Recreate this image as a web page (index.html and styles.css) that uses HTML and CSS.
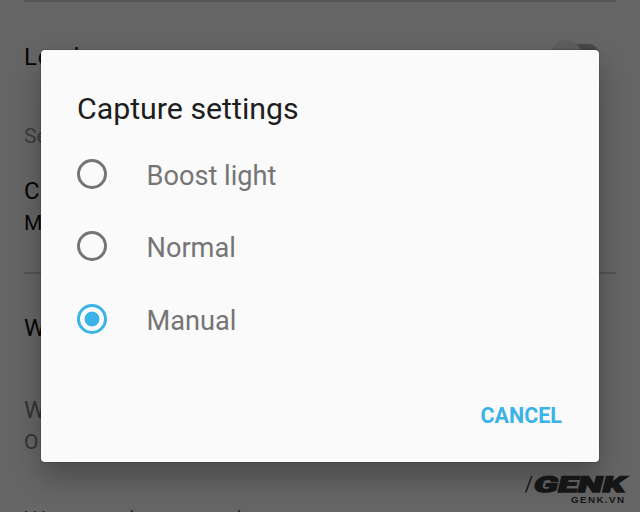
FILE: index.html
```html
<!DOCTYPE html>
<html lang="en">
<head>
<meta charset="utf-8">
<title>Capture settings</title>
<link rel="stylesheet" href="styles.css">
</head>
<body>
<main class="settings">
  <section class="row row-load"><span>Load</span><span class="switch"></span></section>
  <section class="row row-section">Se</section>
  <section class="row row-capture"><span class="name">C</span><span class="value">M</span></section>
  <section class="row row-watermark">W</section>
  <section class="row row-off"><span class="name">W</span><span class="value">O</span></section>
  <section class="row row-last">Watermark camera lens</section>
</main>
<div class="dialog" role="dialog">
  <h1 class="title">Capture settings</h1>
  <div class="options">
    <label class="option"><span class="radio"></span><span class="label">Boost light</span></label>
    <label class="option"><span class="radio"></span><span class="label">Normal</span></label>
    <label class="option"><span class="radio checked"></span><span class="label">Manual</span></label>
  </div>
  <div class="actions"><span class="cancel">CANCEL</span></div>
</div>
<svg class="brand" viewBox="0 0 114 36" width="114" height="36">
  <path d="M5 19.500h1.500L12.500 3h-1.500z"/>
  <text class="brand-name" transform="translate(12.500 18.700) skewX(-14)" textLength="91" lengthAdjust="spacingAndGlyphs">GENK</text>
  <text class="brand-site" x="51" y="29.500" textLength="53">GENK.VN</text>
</svg>
</body>
</html>
```
FILE: styles.css
```css
* { box-sizing: border-box; }
body {
  margin: 0;
  width: 640px;
  height: 512px;
  overflow: hidden;
  position: relative;
  background: #666;
  color: #060606;
  font-family: Roboto, "Liberation Sans", sans-serif;
}
.settings { padding: 0 24px; height: 512px; overflow: hidden; }
.row { display: flex; font-size: 24px; line-height: 28px; }
.row-load { height: 120px; border-top: 2px solid #555; padding-top: 41px; justify-content: space-between; font-size: 24px; letter-spacing: .700px; }
.switch { position: relative; width: 45px; height: 20px; margin: 1px 17px 0 0; border-radius: 10px; background: #484848; }
.switch::before { content: ""; position: absolute; left: -3px; top: -4px; width: 30px; height: 30px; border-radius: 50%; background: #5f5f5f; }
.row-section { height: 50px; padding-top: 2px; font-size: 21px; color: #3c3c3c; }
.row-capture { height: 104px; padding-top: 7px; flex-direction: column; border-bottom: 2px solid #555; }
.value { font-size: 21px; line-height: 32px; margin-top: 2px; }
.row-watermark { height: 82px; padding-top: 40px; }
.row-off { height: 124px; padding-top: 40px; flex-direction: column; color: #343434; }
.row-last { padding-top: 26px; white-space: nowrap; word-spacing: 1.500px; color: #303030; }
.dialog {
  position: absolute;
  left: 41px;
  top: 50px;
  width: 558px;
  height: 412px;
  padding: 39px 37px 0 36px;
  border-radius: 4px;
  background: #fafafa;
  box-shadow: 0 14px 32px rgba(0, 0, 0, .3), 0 0 2px rgba(0, 0, 0, .4);
}
.title { margin: 0; font-size: 30.300px; font-weight: 400; line-height: 40px; color: #1d1d1d; }
.options { padding-top: 10px; }
.option { display: flex; align-items: center; height: 72.300px; font-size: 27.200px; color: #757575; gap: 39.500px; }
.label { padding-top: 2px; }
.radio { position: relative; top: -1px; width: 30px; height: 30px; border: 3px solid #757575; border-radius: 50%; }
.checked { border-color: #3bb3e6; background: radial-gradient(circle, #3bb3e6 7px, transparent 7.800px); }
.actions { display: flex; justify-content: flex-end; margin-top: 46px; }
.cancel { font-size: 21.500px; font-weight: 700; line-height: 28px; color: #3bb3e6; }
.brand { position: absolute; left: 520px; top: 473px; overflow: visible; fill: #151515; }
.brand-name { font: 900 22px Roboto, sans-serif; stroke: #151515; stroke-width: 1.300px; }
.brand-site { font: 700 9.800px "Liberation Sans", sans-serif; }
```
